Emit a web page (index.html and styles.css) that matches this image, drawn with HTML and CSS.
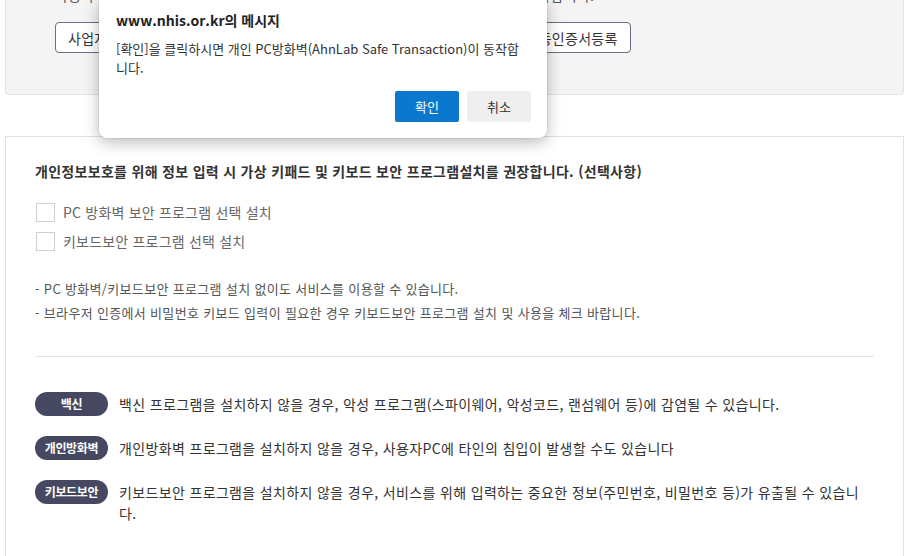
FILE: index.html
```html
<!DOCTYPE html>
<html lang="ko">
<head>
  <meta charset="UTF-8" />
  <meta name="viewport" content="width=device-width, initial-scale=1.0"/>
  <title>보안프로그램 설치</title>
  <link rel="stylesheet" href="styles.css">
</head>
<body>
  <div class="page">
    <!-- 인증서 등록 안내 -->
    <div class="cert-box">
      <p class="cert-text">사용하시는 PC에 등록된 인증서가 없는 경우 공동인증서를 등록한 후 이용하시기 바랍니다.</p>
      <div class="cert-buttons">
        <button class="line-btn">사업자인증서등록</button>
        <button class="line-btn">공동인증서등록</button>
      </div>
    </div>

    <!-- 보안프로그램 선택 -->
    <div class="security-box">
      <h3 class="security-title">개인정보보호를 위해 정보 입력 시 가상 키패드 및 키보드 보안 프로그램설치를 권장합니다. (선택사항)</h3>

      <ul class="check-list">
        <li><label><span class="check"></span>PC 방화벽 보안 프로그램 선택 설치</label></li>
        <li><label><span class="check"></span>키보드보안 프로그램 선택 설치</label></li>
      </ul>

      <ul class="notice-list">
        <li>- PC 방화벽/키보드보안 프로그램 설치 없이도 서비스를 이용할 수 있습니다.</li>
        <li>- 브라우저 인증에서 비밀번호 키보드 입력이 필요한 경우 키보드보안 프로그램 설치 및 사용을 체크 바랍니다.</li>
      </ul>

      <hr class="divider" />

      <dl class="risk-list">
        <div class="risk-row">
          <dt class="badge">백신</dt>
          <dd>백신 프로그램을 설치하지 않을 경우, 악성 프로그램(스파이웨어, 악성코드, 랜섬웨어 등)에 감염될 수 있습니다.</dd>
        </div>
        <div class="risk-row">
          <dt class="badge">개인방화벽</dt>
          <dd>개인방화벽 프로그램을 설치하지 않을 경우, 사용자PC에 타인의 침입이 발생할 수도 있습니다</dd>
        </div>
        <div class="risk-row">
          <dt class="badge">키보드보안</dt>
          <dd>키보드보안 프로그램을 설치하지 않을 경우, 서비스를 위해 입력하는 중요한 정보(주민번호, 비밀번호 등)가 유출될 수 있습니다.</dd>
        </div>
      </dl>
    </div>
  </div>

  <!-- 브라우저 확인창 -->
  <div class="dialog">
    <div class="dialog-title">www.nhis.or.kr의 메시지</div>
    <p class="dialog-msg">[확인]을 클릭하시면 개인 PC방화벽(AhnLab Safe Transaction)이 동작합<br>니다.</p>
    <div class="dialog-actions">
      <button class="btn-ok">확인</button>
      <button class="btn-cancel">취소</button>
    </div>
  </div>
</body>
</html>
```

FILE: styles.css
```css
html, body {
  margin: 0;
  padding: 0;
  background: #fff;
  font-family: "Noto Sans CJK KR", "Noto Sans", sans-serif;
  color: #333;
  overflow: hidden;
}

.page {
  padding: 0 6px 0 5px;
}

.cert-box {
  background: #f4f4f4;
  border: 1px solid #e2e2e2;
  border-top: none;
  border-radius: 0 0 4px 4px;
  margin-top: -28px;
  padding: 12px 49px 41px;
}

.cert-text {
  margin: 0;
  font-size: 14px;
  line-height: 22px;
  color: #555;
  letter-spacing: 0.3px;
}

.cert-buttons {
  display: flex;
  gap: 8px;
  margin-top: 16px;
}

.line-btn {
  height: 31px;
  padding: 0 12px;
  border: 1px solid #6b6f80;
  border-radius: 4px;
  background: #fff;
  font-family: inherit;
  font-size: 14px;
  color: #333;
  letter-spacing: 0.3px;
}

.cert-buttons .line-btn:nth-child(2) {
  margin-left: 318px;
}

.security-box {
  margin-top: 41px;
  border: 1px solid #e2e2e2;
  padding: 23px 29px 30px;
  height: 366px;
}

.security-title {
  margin: 0;
  font-size: 14px;
  line-height: 22px;
  font-weight: 700;
  color: #333;
  letter-spacing: 0.3px;
}

.check-list {
  list-style: none;
  margin: 20px 0 0;
  padding: 0;
}

.check-list li {
  height: 29px;
}

.check-list label {
  display: flex;
  align-items: center;
  gap: 8px;
  font-size: 14px;
  line-height: 20px;
  color: #666;
  letter-spacing: 0.2px;
}

.check {
  width: 17px;
  height: 17px;
  border: 1px solid #cfcfcf;
  background: #fff;
  margin-left: 1px;
}

.notice-list {
  list-style: none;
  margin: 17px 0 0;
  padding: 0;
  font-size: 13px;
  line-height: 24px;
  color: #555;
  letter-spacing: 0.33px;
}

.divider {
  border: none;
  border-top: 1px solid #e5e5e5;
  margin: 31px 0 0;
}

.risk-list {
  margin: 35px 0 0;
  padding: 0;
}

.risk-row {
  display: flex;
  align-items: flex-start;
  gap: 11px;
  margin-bottom: 20px;
}

.badge {
  flex: none;
  width: 73px;
  height: 24px;
  line-height: 24px;
  border-radius: 12px;
  background: #454860;
  color: #fff;
  font-size: 12px;
  font-weight: 700;
  text-align: center;
  letter-spacing: -0.3px;
}

.risk-row dd {
  margin: 0;
  padding: 2px 12px 0 0;
  font-size: 14px;
  line-height: 21px;
  color: #333;
  letter-spacing: 0.35px;
}

.dialog {
  position: absolute;
  left: 99px;
  top: 0;
  width: 448px;
  height: 138px;
  box-sizing: border-box;
  background: #fff;
  border-radius: 0 0 8px 8px;
  box-shadow: 0 4px 16px rgba(0, 0, 0, 0.28), 0 0 2px rgba(0, 0, 0, 0.2);
  padding: 10px 16px 16px 17px;
  font-family: "Noto Sans CJK KR", "Noto Sans", sans-serif;
}

.dialog-title {
  font-size: 14px;
  line-height: 20px;
  font-weight: 700;
  color: #202124;
}

.dialog-msg {
  margin: 9px 0 0;
  font-size: 13px;
  line-height: 19px;
  color: #333;
}

.dialog-actions {
  display: flex;
  justify-content: flex-end;
  gap: 8px;
  margin-top: 14px;
}

.dialog-actions button {
  width: 64px;
  height: 31px;
  border: none;
  border-radius: 2px;
  font-family: inherit;
  font-size: 13px;
  cursor: pointer;
}

.btn-ok {
  background: #0b78d0;
  color: #fff;
}

.btn-cancel {
  background: #efefef;
  color: #333;
}
```
